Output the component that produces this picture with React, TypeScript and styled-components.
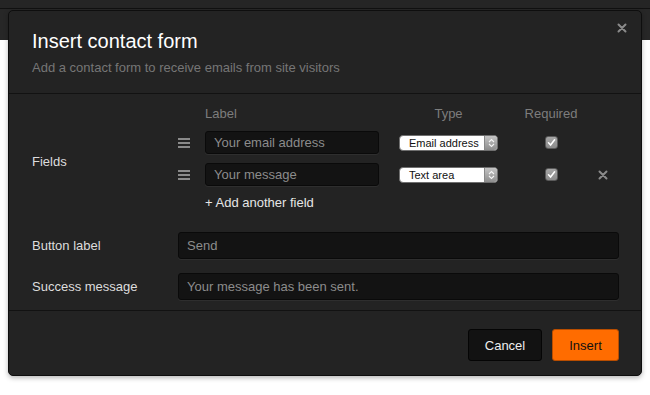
import React from 'react';
import styled, { createGlobalStyle } from 'styled-components';

const GlobalStyle = createGlobalStyle`
  html, body {
    margin: 0;
    padding: 0;
    background: #ffffff;
    font-family: "Liberation Sans", Arial, Helvetica, sans-serif;
  }
  * {
    box-sizing: border-box;
  }
`;

const Page = styled.div`
  position: relative;
  width: 650px;
  height: 395px;
  background: #ffffff;
  overflow: hidden;
`;

const TopBar = styled.div`
  height: 9px;
  background: #252525;
  border-bottom: 1px solid #111111;
`;

const SubBar = styled.div`
  height: 31px;
  background: #272727;
`;

const Modal = styled.div`
  position: absolute;
  left: 8px;
  top: 10px;
  width: 634px;
  height: 366px;
  background: #232323;
  border: 1px solid #0e0e0e;
  border-radius: 5px;
  box-shadow: 0 2px 5px rgba(0, 0, 0, 0.28);
  display: flex;
  flex-direction: column;
`;

const Header = styled.div`
  position: relative;
  height: 83px;
  padding: 18px 23px 0;
  border-bottom: 1px solid #121212;
`;

const Title = styled.h1`
  margin: 0;
  font-size: 20px;
  line-height: 24px;
  font-weight: 400;
  color: #ffffff;
`;

const Subtitle = styled.p`
  margin: 7px 0 0;
  font-size: 13px;
  line-height: 16px;
  color: #767676;
`;

const CloseBtn = styled.button`
  position: absolute;
  top: 10px;
  right: 12px;
  width: 14px;
  height: 14px;
  padding: 0;
  border: none;
  background: none;
  display: flex;
  align-items: center;
  justify-content: center;
  cursor: pointer;
`;

const Body = styled.div`
  height: 217px;
  padding: 12px 22px 0 23px;
  border-bottom: 1px solid #121212;
  display: grid;
  grid-template-columns: 146px 1fr;
  align-content: start;
`;

const RowLabel = styled.div<{ $top?: number }>`
  font-size: 13px;
  line-height: 16px;
  color: #dddddd;
  padding-top: ${(p) => p.$top ?? 0}px;
  align-self: ${(p) => (p.$top !== undefined ? 'start' : 'center')};
`;

const FieldsTable = styled.div`
  display: grid;
  grid-template-columns: 27px 194px 119px 66px 34px;
  grid-auto-rows: auto;
  row-gap: 9px;
  align-items: center;
`;

const ColHead = styled.div<{ $center?: boolean; $w?: number }>`
  font-size: 13px;
  line-height: 16px;
  color: #7d7d7d;
  text-align: ${(p) => (p.$center ? 'center' : 'left')};
  width: ${(p) => (p.$w ? `${p.$w}px` : 'auto')};
`;

const Handle = styled.div`
  width: 12px;
  display: flex;
  flex-direction: column;
  gap: 2px;

  span {
    display: block;
    height: 2px;
    background: #8a8a8a;
  }
`;

const TextInput = styled.input<{ $w?: number }>`
  width: ${(p) => (p.$w ? `${p.$w}px` : '100%')};
  height: ${(p) => (p.$w ? 23 : 27)}px;
  padding: 0 8px;
  background: #131313;
  border: 1px solid #0a0a0a;
  border-radius: 3px;
  box-shadow: 0 1px 0 rgba(255, 255, 255, 0.05);
  font-family: inherit;
  font-size: 13px;
  color: #8c8c8c;
  outline: none;

  &::placeholder {
    color: #8c8c8c;
  }
`;

const Select = styled.div`
  width: 99px;
  height: 16px;
  display: flex;
  background: #ffffff;
  border: 1px solid #6f6f6f;
  border-radius: 4px;
  overflow: hidden;
`;

const SelectText = styled.span`
  flex: 1;
  padding-left: 9px;
  font-size: 11px;
  line-height: 14px;
  color: #111111;
`;

const SelectArrow = styled.span`
  width: 13px;
  display: flex;
  align-items: center;
  justify-content: center;
  background: linear-gradient(#c4c4c4, #8d8d8d);
  border-left: 1px solid #888888;
`;

const CheckCell = styled.div`
  display: flex;
  justify-content: center;
`;

const Check = styled.span`
  width: 13px;
  height: 13px;
  display: flex;
  align-items: center;
  justify-content: center;
  background: linear-gradient(#a5a5a5, #8c8c8c);
  border: 1px solid #5a5a5a;
  border-radius: 3px;
`;

const RemoveCell = styled.div`
  display: flex;
  justify-content: flex-start;
  padding-left: 14px;
`;

const AddLink = styled.a`
  grid-column: 2 / -1;
  font-size: 13px;
  line-height: 16px;
  color: #e6e6e6;
  text-decoration: none;
  cursor: pointer;
`;

const Spacer = styled.div<{ $h: number }>`
  grid-column: 1 / -1;
  height: ${(p) => p.$h}px;
`;

const Footer = styled.div`
  flex: 1;
  display: flex;
  justify-content: flex-end;
  align-items: flex-start;
  gap: 10px;
  padding: 18px 22px 0 0;
`;

const Button = styled.button<{ $primary?: boolean; $w: number }>`
  width: ${(p) => p.$w}px;
  height: 32px;
  border-radius: 3px;
  border: 1px solid ${(p) => (p.$primary ? '#b84d00' : '#050505')};
  background: ${(p) => (p.$primary ? '#ff6c00' : '#121212')};
  color: ${(p) => (p.$primary ? '#111111' : '#eeeeee')};
  font-family: inherit;
  font-size: 13px;
  cursor: pointer;
`;

const XIcon = ({ size, color }: { size: number; color: string }) => (
  <svg width={size} height={size} viewBox="0 0 10 10">
    <path d="M1.5 1.5 L8.5 8.5 M8.5 1.5 L1.5 8.5" stroke={color} strokeWidth="2" strokeLinecap="round" />
  </svg>
);

const UpDown = () => (
  <svg width="7" height="10" viewBox="0 0 7 10">
    <path d="M1 4 L3.5 1.5 L6 4 M1 6 L3.5 8.5 L6 6" stroke="#f4f4f4" strokeWidth="1.1" fill="none" />
  </svg>
);

const CheckMark = () => (
  <svg width="9" height="9" viewBox="0 0 9 9">
    <path d="M1.5 4.8 L3.6 7 L7.6 1.8" stroke="#ffffff" strokeWidth="1.6" fill="none" strokeLinecap="round" />
  </svg>
);

interface FieldRow {
  label: string;
  type: string;
  removable: boolean;
}

const rows: FieldRow[] = [
  { label: 'Your email address', type: 'Email address', removable: false },
  { label: 'Your message', type: 'Text area', removable: true },
];

const App: React.FC = () => {
  return (
    <>
      <GlobalStyle />
      <Page>
        <TopBar />
        <SubBar />
        <Modal>
          <Header>
            <Title>Insert contact form</Title>
            <Subtitle>Add a contact form to receive emails from site visitors</Subtitle>
            <CloseBtn aria-label="Close">
              <XIcon size={10} color="#8a8a8a" />
            </CloseBtn>
          </Header>
          <Body>
            <RowLabel $top={48}>Fields</RowLabel>
            <FieldsTable>
              <div />
              <ColHead>Label</ColHead>
              <ColHead $center $w={99}>Type</ColHead>
              <ColHead $center>Required</ColHead>
              <div />
              {rows.map((r) => (
                <React.Fragment key={r.label}>
                  <Handle>
                    <span />
                    <span />
                    <span />
                  </Handle>
                  <TextInput $w={174} placeholder={r.label} />
                  <Select>
                    <SelectText>{r.type}</SelectText>
                    <SelectArrow>
                      <UpDown />
                    </SelectArrow>
                  </Select>
                  <CheckCell>
                    <Check>
                      <CheckMark />
                    </Check>
                  </CheckCell>
                  <RemoveCell>{r.removable && <XIcon size={10} color="#8a8a8a" />}</RemoveCell>
                </React.Fragment>
              ))}
              <AddLink>+ Add another field</AddLink>
            </FieldsTable>
            <Spacer $h={21} />
            <RowLabel>Button label</RowLabel>
            <TextInput placeholder="Send" />
            <Spacer $h={14} />
            <RowLabel>Success message</RowLabel>
            <TextInput placeholder="Your message has been sent." />
          </Body>
          <Footer>
            <Button $w={74}>Cancel</Button>
            <Button $primary $w={67}>Insert</Button>
          </Footer>
        </Modal>
      </Page>
    </>
  );
};

export default App;
